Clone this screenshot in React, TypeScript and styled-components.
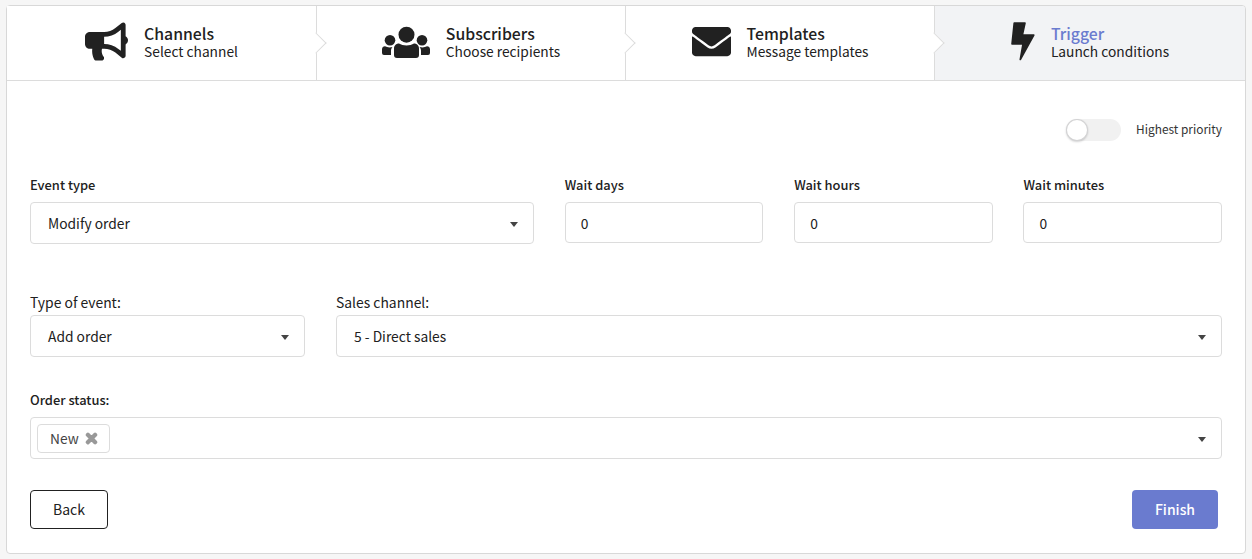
import React from "react";
import styled, { createGlobalStyle } from "styled-components";
import { FaBullhorn, FaEnvelope, FaTimes } from "react-icons/fa";

const Global = createGlobalStyle`
  html, body { margin: 0; padding: 0; background: #f6f6f6; }
  * { box-sizing: border-box; }
  body { font-family: "Noto Sans CJK SC", "Noto Sans", sans-serif; font-size: 14px; color: #212121; }
`;

const Card = styled.div`
  width: 1240px;
  height: 549px;
  margin: 5px 0 0 6px;
  background: #fff;
  border: 1px solid #d8d8d8;
  border-radius: 4px;
  display: flex;
  flex-direction: column;
`;

const Steps = styled.div`
  display: grid;
  grid-template-columns: 310px 309px 309px 1fr;
  height: 75px;
  border-bottom: 1px solid #dcdcdc;
`;

const Step = styled.div<{ $active?: boolean; $last?: boolean }>`
  position: relative;
  display: flex;
  align-items: center;
  justify-content: center;
  gap: 16px;
  padding-bottom: 3px;
  border-right: ${(p) => (p.$last ? "none" : "1px solid #dcdcdc")};
  background: ${(p) => (p.$active ? "#f2f3f5" : "#fff")};
  border-top-right-radius: ${(p) => (p.$last ? "3px" : "0")};

  &::after {
    content: "";
    display: ${(p) => (p.$last ? "none" : "block")};
    position: absolute;
    z-index: 2;
    top: 50%;
    right: 0;
    width: 14px;
    height: 14px;
    background: #fff;
    border-top: 1px solid #dcdcdc;
    border-right: 1px solid #dcdcdc;
    transform: translate(50%, -50%) rotate(45deg);
  }
`;

const StepIcon = styled.span`
  display: flex;
  color: #212121;
  svg { display: block; }
`;

const StepText = styled.div`
  display: flex;
  flex-direction: column;
`;

const StepTitle = styled.div<{ $active?: boolean }>`
  font-size: 15.8px;
  font-weight: 500;
  line-height: 19px;
  color: ${(p) => (p.$active ? "#6a7bcf" : "#212121")};
`;

const StepDesc = styled.div`
  font-size: 13.75px;
  line-height: 17px;
  color: #212121;
`;

const Form = styled.div`
  flex: 1;
  padding: 38px 23px 0;
  display: flex;
  flex-direction: column;
`;

const PriorityRow = styled.div`
  display: flex;
  justify-content: flex-end;
  align-items: center;
  gap: 15px;
  height: 22px;
`;

const Toggle = styled.div`
  position: relative;
  width: 55px;
  height: 22px;
  border-radius: 11px;
  background: #f1f1f1;

  &::before {
    content: "";
    position: absolute;
    left: 0;
    top: 0;
    width: 22px;
    height: 22px;
    border-radius: 50%;
    background: #fff;
    box-shadow: 0 1px 2px rgba(34, 36, 38, 0.2), 0 0 0 1px rgba(34, 36, 38, 0.2) inset;
  }
`;

const ToggleLabel = styled.span`
  font-size: 11.9px;
  line-height: 16px;
  padding-bottom: 2px;
  color: #333;
`;

const TopGrid = styled.div`
  display: grid;
  grid-template-columns: 504px repeat(3, 1fr);
  column-gap: 30.8px;
  margin-top: 35px;
`;

const MidGrid = styled.div`
  display: grid;
  grid-template-columns: 275px 1fr;
  column-gap: 31px;
  margin-top: 49px;
`;

const Field = styled.div<{ $top?: number }>`
  display: flex;
  flex-direction: column;
  margin-top: ${(p) => p.$top ?? 0}px;
`;

const Label = styled.label`
  display: block;
  font-size: 12.9px;
  font-weight: 500;
  line-height: 18px;
  margin-bottom: 8px;
  color: #212121;
`;

const PlainLabel = styled(Label)`
  font-size: 13.9px;
  font-weight: 400;
  margin-bottom: 4px;
`;

const Select = styled.div`
  position: relative;
  display: flex;
  align-items: center;
  height: 42px;
  padding: 0 17px;
  font-size: 13.8px;
  color: #212121;
  background: #fff;
  border: 1px solid #dcdcdc;
  border-radius: 4px;

  &::after {
    content: "";
    position: absolute;
    right: 15px;
    top: 19px;
    border-left: 4.5px solid transparent;
    border-right: 4.5px solid transparent;
    border-top: 5px solid #444;
  }
`;

const MultiSelect = styled(Select)`
  padding: 0 6px;
`;

const Chip = styled.span`
  display: inline-flex;
  align-items: center;
  gap: 5px;
  height: 29px;
  padding: 0 10px 0 12px;
  font-size: 13.75px;
  color: #444;
  border: 1px solid #dcdcdc;
  border-radius: 4px;

  svg { display: block; color: #999; stroke: #999; stroke-width: 50; }
`;

const Input = styled.div`
  display: flex;
  align-items: center;
  height: 41px;
  padding: 0 15px;
  font-size: 13.8px;
  color: #212121;
  background: #fff;
  border: 1px solid #dcdcdc;
  border-radius: 4px;
`;

const Actions = styled.div`
  display: flex;
  justify-content: space-between;
  margin-top: 31px;
  padding-right: 4px;
`;

const BackButton = styled.button`
  width: 78px;
  height: 39px;
  padding: 0 0 2px;
  font: inherit;
  font-size: 14px;
  color: #212121;
  background: #fff;
  border: 1px solid #212121;
  border-radius: 4px;
`;

const FinishButton = styled.button`
  width: 86px;
  height: 39px;
  padding: 0 0 2px;
  font: inherit;
  font-size: 14px;
  font-weight: 500;
  color: #fff;
  background: #6a7bcf;
  border: none;
  border-radius: 4px;
`;

const PeopleIcon = () => (
  <svg width="48" height="36" viewBox="0 0 48 36" fill="currentColor">
    <circle cx="24.5" cy="10.7" r="8" />
    <circle cx="8" cy="16.3" r="5.3" />
    <circle cx="40" cy="16.3" r="5.3" />
    <path d="M17 19.5c2 1.2 4.6 1.9 7.5 1.9s5.5-.7 7.500-1.900c3 0 5 2.200 5 5v6.500a3 3 0 0 1-3 3H15a3 3 0 0 1-3-3v-6.500c0-2.800 2-5 5-5z" />
    <path d="M3 22.300c1.300.7 2.800 1.100 4.500 1.100 1 0 2-.2 3-.5-.9 1-1.500 2.300-1.500 3.800v4.300H2a2 2 0 0 1-2-2v-3.700c0-1.700 1.300-3 3-3z" />
    <path d="M45 22.300c-1.300.7-2.800 1.100-4.500 1.100-1 0-2-.2-3-.5.900 1 1.500 2.300 1.500 3.800v4.300H46a2 2 0 0 0 2-2v-3.700c0-1.700-1.300-3-3-3z" />
  </svg>
);

const BoltIcon = () => (
  <svg width="24" height="39" viewBox="0 0 24 39" fill="currentColor" stroke="currentColor" strokeWidth="1.6" strokeLinejoin="round">
    <path d="M3.200 1H14L11.400 13H22.800L9.300 37.500L12 22H1Z" />
  </svg>
);

const steps = [
  { title: "Channels", desc: "Select channel", icon: <FaBullhorn size={43} /> },
  { title: "Subscribers", desc: "Choose recipients", icon: <PeopleIcon /> },
  { title: "Templates", desc: "Message templates", icon: <FaEnvelope size={39} /> },
  { title: "Trigger", desc: "Launch conditions", icon: <BoltIcon />, active: true },
];

export default function App() {
  return (
    <>
      <Global />
      <Card>
        <Steps>
          {steps.map(({ title, desc, icon, active }, i) => (
            <Step key={title} $active={active} $last={i === steps.length - 1}>
              <StepIcon>{icon}</StepIcon>
              <StepText>
                <StepTitle $active={active}>{title}</StepTitle>
                <StepDesc>{desc}</StepDesc>
              </StepText>
            </Step>
          ))}
        </Steps>
        <Form>
          <PriorityRow>
            <Toggle />
            <ToggleLabel>Highest priority</ToggleLabel>
          </PriorityRow>
          <TopGrid>
            <Field>
              <Label>Event type</Label>
              <Select>Modify order</Select>
            </Field>
            <Field>
              <Label>Wait days</Label>
              <Input>0</Input>
            </Field>
            <Field>
              <Label>Wait hours</Label>
              <Input>0</Input>
            </Field>
            <Field>
              <Label>Wait minutes</Label>
              <Input>0</Input>
            </Field>
          </TopGrid>
          <MidGrid>
            <Field>
              <PlainLabel>Type of event:</PlainLabel>
              <Select>Add order</Select>
            </Field>
            <Field>
              <PlainLabel>Sales channel:</PlainLabel>
              <Select>5 - Direct sales</Select>
            </Field>
          </MidGrid>
          <Field $top={34}>
            <Label>Order status:</Label>
            <MultiSelect>
              <Chip>
                New <FaTimes size={15} />
              </Chip>
            </MultiSelect>
          </Field>
          <Actions>
            <BackButton>Back</BackButton>
            <FinishButton>Finish</FinishButton>
          </Actions>
        </Form>
      </Card>
    </>
  );
}
